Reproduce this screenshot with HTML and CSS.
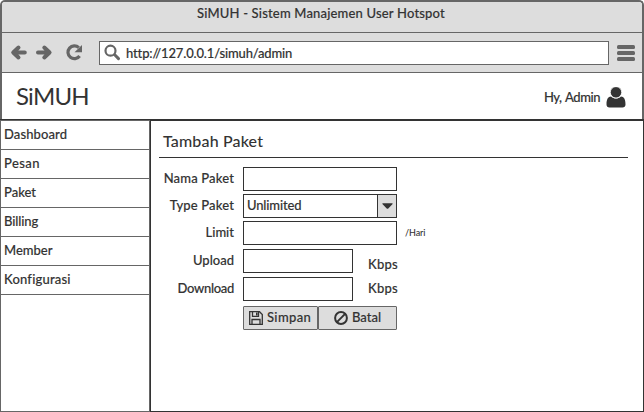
FILE: index.html
```
<!DOCTYPE html>
<html lang="id">
<head>
<meta charset="utf-8">
<title>SiMUH - Sistem Manajemen User Hotspot</title>
<link rel="stylesheet" href="styles.css">
</head>
<body>
<div class="window">
  <div class="chrome">
    <div class="titlebar"><span class="title">SiMUH - Sistem Manajemen User Hotspot</span></div>
    <div class="toolbar">
      <svg class="nav" width="76" height="18" viewBox="0 0 76 18" fill="none" stroke="#666" stroke-linecap="round" stroke-linejoin="round">
        <path d="M8.500 3.500 3.200 8.500l5.300 5M4 8.500h10.800" stroke-width="4"/>
        <path d="M34.300 3.500l5.300 5-5.300 5M38.800 8.500H28" stroke-width="4"/>
        <path d="M68.800 3.700a6.400 6.400 0 1 0 .8 8.300" stroke-width="3.200" stroke-linecap="butt"/>
        <path d="M72 1v7.200h-7.500z" fill="#666" stroke="none"/>
      </svg>
      <div class="address">
        <svg width="18" height="18" viewBox="0 0 18 18" fill="none" stroke="#666">
          <circle cx="6.500" cy="6.700" r="5" stroke-width="2.200"/>
          <path d="M10.700 10.800l3.800 3.800" stroke-width="3" stroke-linecap="round"/>
        </svg>
        <span class="url">http://127.0.0.1/simuh/admin</span>
      </div>
      <svg class="menu" width="18" height="16" viewBox="0 0 18 16" fill="#666">
        <rect width="18" height="4" rx="1.500"/><rect y="6" width="18" height="4" rx="1.500"/><rect y="12" width="18" height="4" rx="1.500"/>
      </svg>
    </div>
    <header class="header">
      <h1 class="brand">SiMUH</h1>
      <span class="hello">Hy, Admin</span>
      <svg width="20" height="21" viewBox="0 0 20 21" fill="#333">
        <path d="M5 9.500C2 9.800.5 12 .5 17.500c0 2 1.200 3 3 3h13c1.800 0 3-1 3-3 0-5.500-1.500-7.700-4.500-8-3 2.800-7 2.800-10 0z"/>
        <circle cx="10" cy="5.300" r="5.700" stroke="#fff" stroke-width=".8"/>
      </svg>
    </header>
  </div>
  <div class="body">
    <nav class="sidebar">
      <a class="dashboard">Dashboard</a>
      <a class="pesan">Pesan</a>
      <a>Paket</a>
      <a class="billing">Billing</a>
      <a>Member</a>
      <a class="konfigurasi">Konfigurasi</a>
    </nav>
    <main class="main">
      <h2 class="heading">Tambah Paket</h2>
      <form class="form">
        <div class="row"><label class="wide">Nama Paket</label><div class="field"></div></div>
        <div class="row type"><label class="wide">Type Paket</label><div class="field select"><span>Unlimited</span><i class="arrow"><svg width="11" height="6" viewBox="0 0 11 6"><path d="M1 .3h9c.7 0 .8.5.4.900L6.300 5.400c-.5.500-1.100.5-1.600 0L.6 1.200C.2.800.3.300 1 .300z" fill="#333"/></svg></i></div></div>
        <div class="row limit"><label>Limit</label><div class="field"></div><span class="per">/Hari</span></div>
        <div class="row upload"><label>Upload</label><div class="field short"></div><span class="unit low">Kbps</span></div>
        <div class="row download"><label class="narrow">Download</label><div class="field short"></div><span class="unit">Kbps</span></div>
        <div class="actions">
          <div class="button save">
            <svg width="14" height="14" viewBox="0 0 14 14" fill="none" stroke="#333" stroke-width="1.300">
              <path d="M.7.700h9.800l2.800 2.800v9.800H.700z"/><path d="M3 13.300V8.500h8v4.800"/><path d="M3.500.700v4.600h6V.700"/><path d="M7.800 1.500v3" stroke-width="1.600"/>
            </svg>
            <span>Simpan</span>
          </div>
          <div class="button cancel">
            <svg width="14" height="14" viewBox="0 0 14 14" fill="none" stroke="#333" stroke-width="2">
              <circle cx="7" cy="7" r="5.900"/><path d="M2.900 11.100l8.200-8.200"/>
            </svg>
            <span>Batal</span>
          </div>
        </div>
      </form>
    </main>
  </div>
</div>
</body>
</html>
```
FILE: styles.css
```
* { box-sizing: border-box; }
body { margin: 0; background: #fff; color: #333; font: 500 13px/16px Lato, sans-serif; -webkit-text-stroke: .15px #333; }
svg { display: block; flex: none; }
.window { width: 644px; height: 412px; display: flex; flex-direction: column; }
.chrome { height: 119px; border: 2px solid #666; border-bottom: 0; border-radius: 5px 5px 0 0; overflow: hidden; }
.titlebar { height: 31px; background: #ddd; border-bottom: 1px solid #666; text-align: center; padding-top: 3px; }
.title { letter-spacing: .18px; padding-right: 2px; }
.toolbar { height: 40px; background: #ddd; border-bottom: 1px solid #666; display: flex; align-items: center; padding-left: 8px; }
.nav { margin-right: 13px; }
.address { width: 510px; height: 24px; border: 1px solid #666; background: #fff; display: flex; align-items: center; padding-left: 4px; }
.url { margin-left: 4px; letter-spacing: -.15px; }
.menu { margin-left: 8px; }
.header { height: 46px; background: #fff; display: flex; align-items: center; padding: 2px 16px 0 14px; }
.brand { margin: 0 auto 0 0; padding-bottom: 3px; font: 400 24px/30px Lato, sans-serif; letter-spacing: -.8px; -webkit-text-stroke: 0; }
.hello { margin-right: 6px; padding-bottom: 1px; letter-spacing: -.45px; word-spacing: 1px; }
.body { flex: 1; display: flex; border-top: 1px solid #333; }
.sidebar { width: 150px; border: 1px solid #666; }
.sidebar a { display: block; height: 29px; border-bottom: 1px solid #666; padding: 5px 3px 0; }
.sidebar .pesan { letter-spacing: .4px; }
.sidebar .dashboard { letter-spacing: .1px; }
.sidebar .billing { letter-spacing: -.1px; }
.sidebar .konfigurasi { letter-spacing: .2px; }
.main { flex: 1; border: 1px solid #333; padding: 0 15px 0 8px; }
.heading { margin: 0; height: 37px; border-bottom: 1px solid #333; padding: 10px 4px 0; font: 500 16px/20px Lato, sans-serif; letter-spacing: .15px; -webkit-text-stroke: 0; }
.form { padding-top: 9px; }
.row { display: flex; align-items: center; height: 24px; }
.row label { width: 75px; margin-right: 9px; padding-bottom: 2px; text-align: right; }
.row .wide { letter-spacing: .15px; }
.row .narrow { letter-spacing: -.3px; }
.field { width: 154px; height: 24px; border: 1px solid #333; }
.short { width: 110px; }
.type, .limit { margin-top: 3px; }
.upload, .download { margin-top: 4px; }
.select { display: flex; padding-left: 3px; line-height: 21px; letter-spacing: -.15px; }
.arrow { width: 19px; margin-left: auto; background: #ddd; border-left: 1px solid #333; display: flex; align-items: center; justify-content: center; }
.per { margin-left: 8px; font-size: 9px; letter-spacing: -.1px; -webkit-text-stroke: 0; }
.unit { margin-left: 15px; padding-bottom: 2px; letter-spacing: .2px; }
.low { padding-top: 8px; }
.actions { display: flex; margin: 5px 0 0 84px; }
.button { height: 24px; background: #ddd; border: 1px solid #666; border-radius: 1px; display: flex; align-items: center; }
.save { width: 75px; padding-left: 5px; letter-spacing: .35px; }
.cancel { width: 79px; padding-left: 15px; }
.button span { margin-left: 4px; padding-bottom: 2px; }
```
